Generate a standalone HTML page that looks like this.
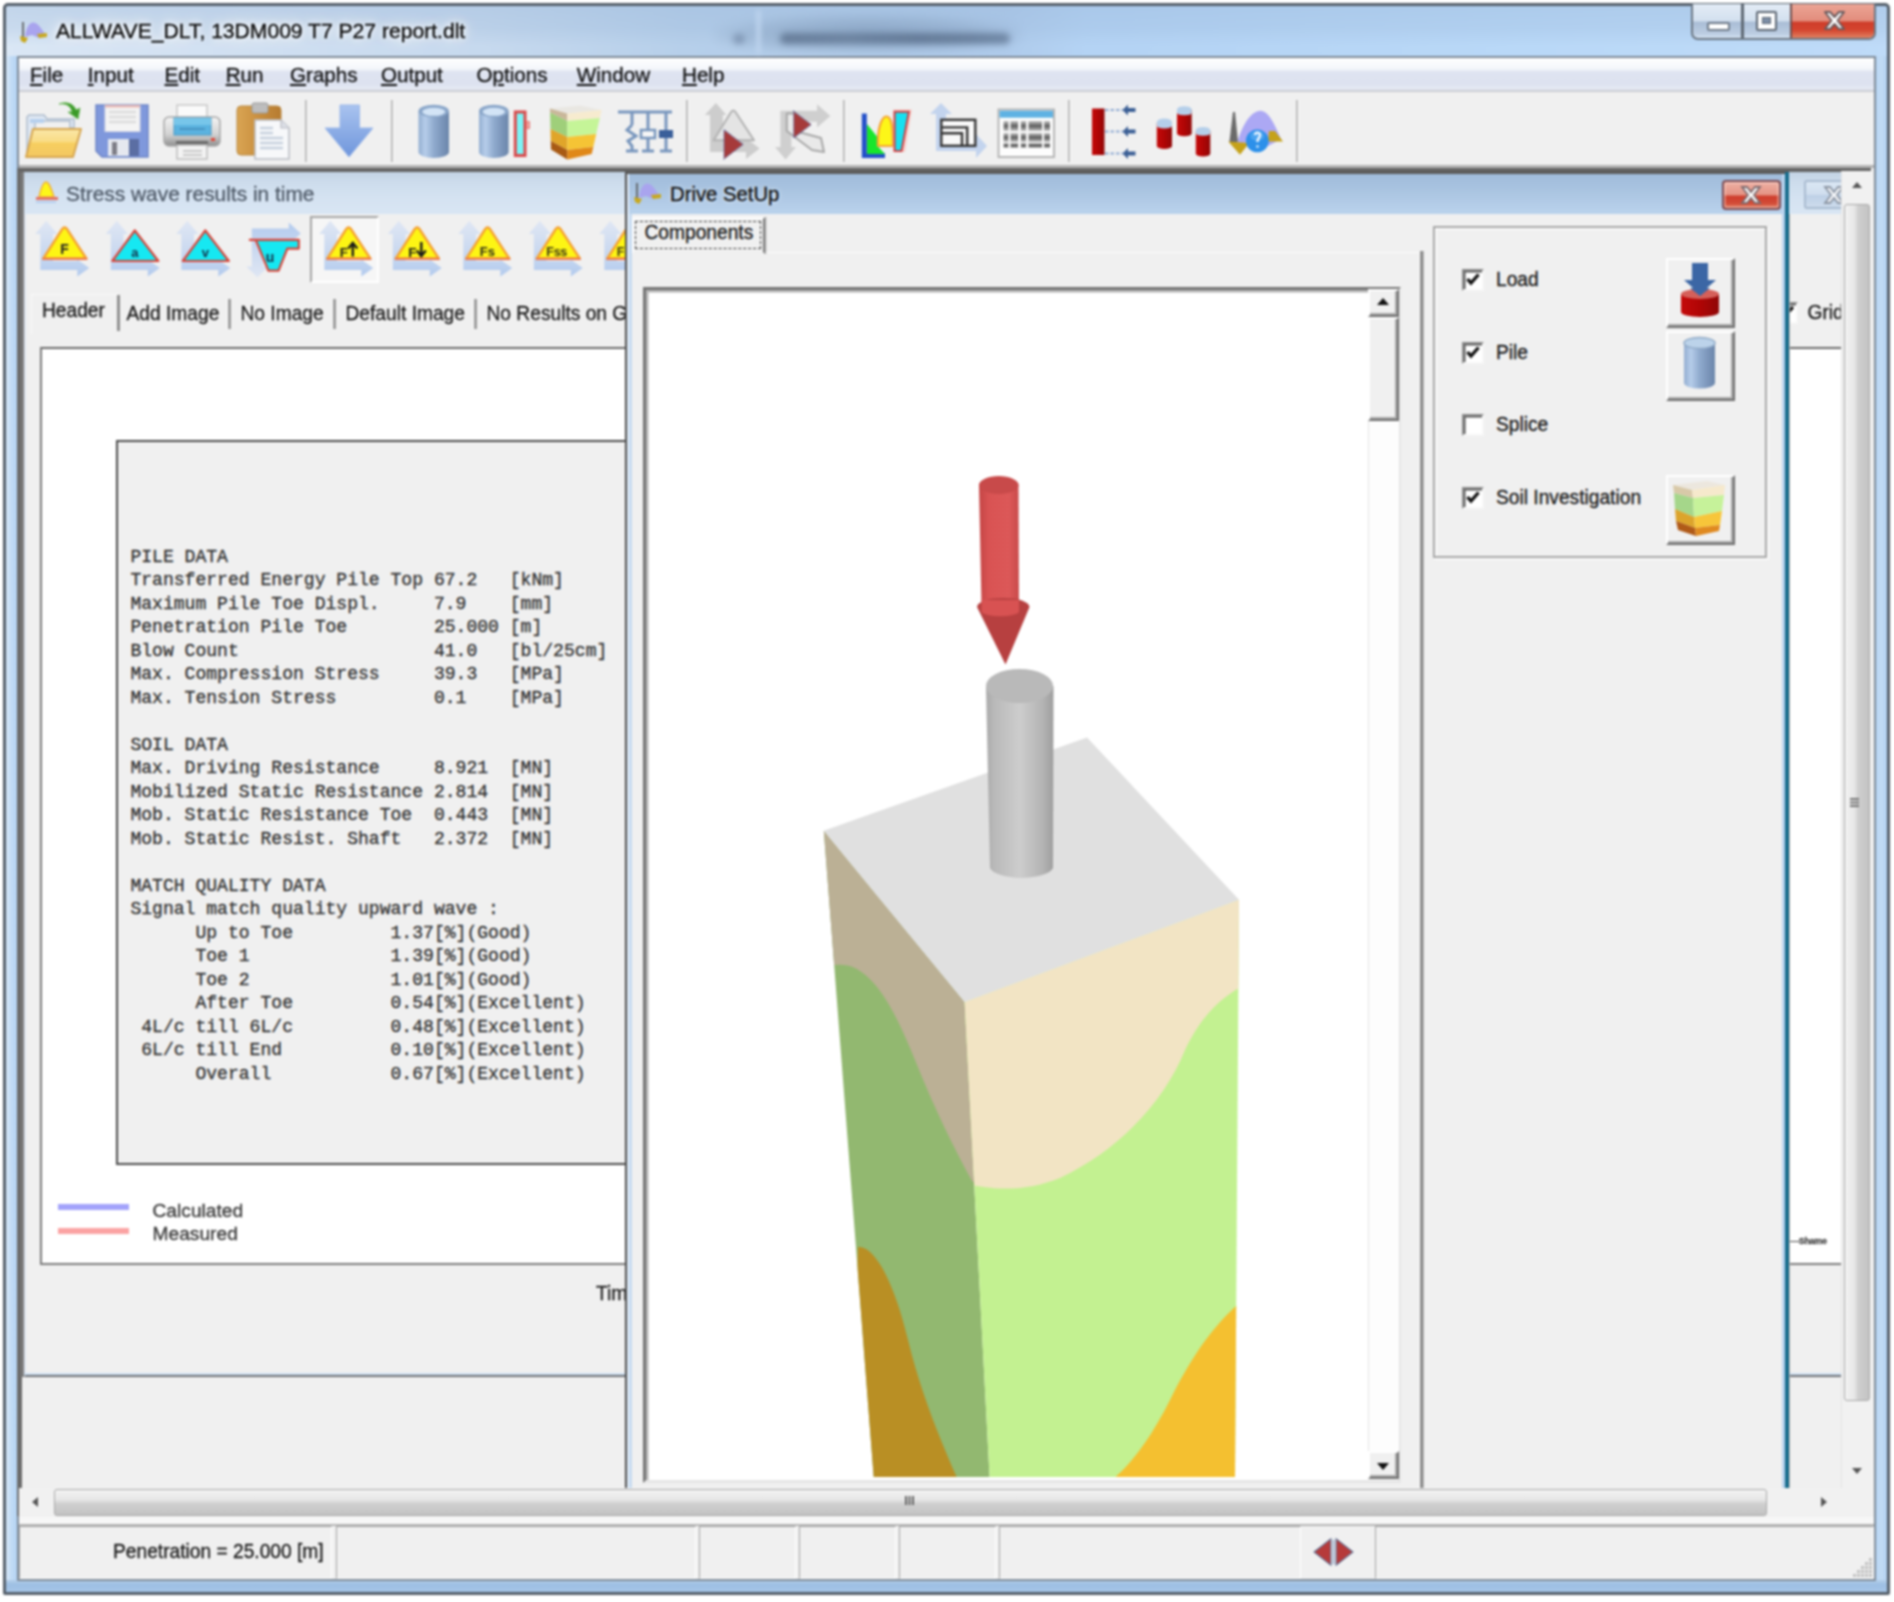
<!DOCTYPE html>
<html>
<head>
<meta charset="utf-8">
<title>ALLWAVE_DLT</title>
<style>
*{box-sizing:border-box;margin:0;padding:0}
html,body{width:1894px;height:1602px;background:#fff;overflow:hidden}
body{font-family:"Liberation Sans",sans-serif;color:#000;position:relative}
.a{position:absolute}
.t{position:absolute;white-space:nowrap;line-height:1;-webkit-text-stroke:.3px currentColor}
.ms{font-size:19.2px;color:#1a1a1a;transform:scaleY(1.1);transform-origin:0 100%}
.seg{font-size:20.8px}
u{text-decoration:underline;text-underline-offset:2px;text-decoration-thickness:1.5px}
#win{left:3px;top:3px;width:1887px;height:1592px;background:linear-gradient(180deg,rgba(150,180,215,.35) 0,rgba(150,180,215,.25) 22px,rgba(255,255,255,0) 40px),linear-gradient(90deg,#dae7f5 0,#d2e1f2 200px,#c6d9ee 480px,#b6cfea 680px,#afcbeb 1000px,#b4d3f4 1080px,#b9d8f7 1500px,#bfdbf8 1887px);border:3px solid #56606b;border-bottom-width:4.5px;border-radius:5px 5px 2px 2px}
#winL{left:6px;top:56px;width:11px;height:1524px;background:linear-gradient(90deg,#d5e6f8,#c1dbf5 50%,#b4d3f3)}
#winR{left:1876px;top:56px;width:11px;height:1524px;background:linear-gradient(90deg,#b9d6f3,#c1dbf5 50%,#b2d1f1)}
#winB{left:6px;top:1580px;width:1881px;height:12px;background:linear-gradient(180deg,#b5cfea 0,#9dbfe3 40%,#a6c6e8 100%)}
#client{left:17px;top:56px;width:1859px;height:1525px;background:#f0f0f0;border:2px solid #7e8a97}
#menubar{left:19px;top:58px;width:1855px;height:34px;background:linear-gradient(180deg,#ffffff 0,#f4f6fb 11px,#dfe4f1 14px,#dde2f0 26px,#e6eaf5 31px,#c9cbd1 33px,#c9cbd1 34px)}
#toolbar{left:19px;top:92px;width:1855px;height:73px;background:#f0f0f0}
.sep{position:absolute;top:100px;width:3px;height:62px;border-left:2px solid #bdbdbd;border-right:1px solid #fbfbfb}
pre{font-family:"Liberation Mono",monospace;font-size:18.07px;line-height:23.5px;color:#333;position:absolute;white-space:pre;-webkit-text-stroke:.3px #333}
.sunk{border:1.5px solid;border-color:#a3a3a3 #fff #fff #a3a3a3}
.btn3d{background:#f0f0f0;border:2px solid;border-color:#fff #6e6e6e #6e6e6e #fff;box-shadow:inset -2px -2px 0 #a8a8a8}
.cb{width:22px;height:22px;background:#fff;border:2px solid;border-color:#8a8a8a #f7f7f7 #f7f7f7 #8a8a8a;box-shadow:inset 1.5px 1.5px 0 #5a5a5a}
</style>
</head>
<body>
<div id="root" style="position:absolute;left:0;top:0;width:1894px;height:1602px;filter:blur(.9px)">
<div id="win" class="a"></div>
<div id="winL" class="a"></div><div id="winR" class="a"></div><div id="winB" class="a"></div>
<div id="client" class="a"></div>
<div id="menubar" class="a"></div>
<div id="toolbar" class="a"></div>
<!--TITLE-->
<div class="a" style="left:715px;top:14px;width:305px;height:38px;background:radial-gradient(ellipse at 50% 55%,rgba(95,120,150,.42) 0,rgba(110,135,165,.28) 50%,rgba(150,175,205,0) 78%);filter:blur(4px)"></div>
<div class="a" style="left:756px;top:10px;width:5px;height:44px;background:rgba(190,212,238,.9);filter:blur(2px)"></div>
<div class="a" style="left:733px;top:34px;width:12px;height:10px;background:rgba(80,100,130,.45);filter:blur(3px);border-radius:5px"></div>
<div class="a" style="left:780px;top:33px;width:230px;height:11px;background:linear-gradient(90deg,rgba(70,90,118,.62),rgba(70,90,118,.5) 30%,rgba(70,90,118,.62) 60%,rgba(70,90,118,.55));filter:blur(3.2px);border-radius:6px"></div>
<svg class="a" style="left:19px;top:20px" width="30" height="24" viewBox="0 0 30 24">
 <path d="M4 2 L4 19" stroke="#555" stroke-width="1.6"/>
 <path d="M6 17 C7 6 12 1 16 3 C20 4 23 10 27 15 L20 18 L13 15 Z" fill="#a9a4ee"/>
 <path d="M1 16 L9 18 L6 23 L2 21 Z" fill="#c8a81e"/>
 <path d="M18 14 L28 13 L28 17 L20 18 Z" fill="#c8a81e"/>
</svg>
<div class="t seg" style="left:56px;top:19.5px;font-size:21.1px;color:#0a0a0a;text-shadow:0 0 6px #fff,0 0 10px #fff,0 0 16px #fff,0 0 22px rgba(255,255,255,.9)">ALLWAVE_DLT, 13DM009 T7 P27 report.dlt</div>
<!-- caption buttons -->
<div class="a" style="left:1691px;top:4px;width:185px;height:36px;border:2px solid #6a7683;border-top:none;border-radius:0 0 7px 7px;overflow:hidden;background:linear-gradient(180deg,#e3ecf6 0,#d3e0ef 17px,#a9bdd6 18px,#bccde2 30px,#d6e4f3 34px)">
 <div class="a" style="left:48px;top:0;width:2.5px;height:36px;background:#5d6772"></div>
 <div class="a" style="left:97px;top:0;width:86px;height:36px;background:linear-gradient(180deg,#eba595 0,#e28c7c 17px,#cf3c2a 18px,#d4452f 26px,#e08263 34px);border-left:2px solid #6d4f4f"></div>
</div>
<div class="a" style="left:1707px;top:22px;width:23px;height:9px;background:#fff;border:2px solid #6f7b89;border-radius:2px"></div>
<div class="a" style="left:1756px;top:11px;width:21px;height:20px;background:#fff;border:2px solid #5c6672;border-radius:2px"></div>
<div class="a" style="left:1762px;top:17px;width:9px;height:7px;background:#7d8ea6;border:1.5px solid #5c6672"></div>
<svg class="a" style="left:1822px;top:10px" width="25" height="21" viewBox="0 0 25 21"><path d="M3 2 L8 2 L12.5 7 L17 2 L22 2 L15.5 10.5 L22 19 L17 19 L12.5 14 L8 19 L3 19 L9.5 10.5 Z" fill="#fff" stroke="#6a5a5c" stroke-width="2" stroke-linejoin="round"/></svg>

<!--MENU-->
<div class="t seg" style="left:30.0px;top:64.5px;font-size:20.6px;color:#111"><u>F</u>ile</div>
<div class="t seg" style="left:87.8px;top:64.5px;font-size:20.6px;color:#111"><u>I</u>nput</div>
<div class="t seg" style="left:164.5px;top:64.5px;font-size:20.6px;color:#111"><u>E</u>dit</div>
<div class="t seg" style="left:225.7px;top:64.5px;font-size:20.6px;color:#111"><u>R</u>un</div>
<div class="t seg" style="left:290.0px;top:64.5px;font-size:20.6px;color:#111"><u>G</u>raphs</div>
<div class="t seg" style="left:381.0px;top:64.5px;font-size:20.6px;color:#111"><u>O</u>utput</div>
<div class="t seg" style="left:476.5px;top:64.5px;font-size:20.6px;color:#111">O<u>p</u>tions</div>
<div class="t seg" style="left:576.8px;top:64.5px;font-size:20.6px;color:#111"><u>W</u>indow</div>
<div class="t seg" style="left:682.0px;top:64.5px;font-size:20.6px;color:#111"><u>H</u>elp</div>

<!--TOOLBAR-->
<svg class="a" style="left:19px;top:92px" width="1300" height="74" viewBox="19 92 1300 74">
<defs>
 <linearGradient id="gFold" x1="0" y1="0" x2="0" y2="1"><stop offset="0" stop-color="#fbe7a8"/><stop offset=".45" stop-color="#f9dc85"/><stop offset=".5" stop-color="#f7cf60"/><stop offset="1" stop-color="#f3c862"/></linearGradient>
 <linearGradient id="gCyl" x1="0" y1="0" x2="1" y2="0"><stop offset="0" stop-color="#93aed0"/><stop offset=".22" stop-color="#b6cdea"/><stop offset=".5" stop-color="#90abce"/><stop offset=".8" stop-color="#7993b8"/><stop offset="1" stop-color="#6b86aa"/></linearGradient>
 <linearGradient id="gArr" x1="0" y1="0" x2="0" y2="1"><stop offset="0" stop-color="#a9c3ef"/><stop offset="1" stop-color="#6f96dc"/></linearGradient>
 <linearGradient id="gRed" x1="0" y1="0" x2="1" y2="0"><stop offset="0" stop-color="#c40a0a"/><stop offset=".5" stop-color="#b00505"/><stop offset="1" stop-color="#8f0808"/></linearGradient>
 <linearGradient id="gClip" x1="0" y1="0" x2="1" y2="0"><stop offset="0" stop-color="#d9a553"/><stop offset=".5" stop-color="#c98f3f"/><stop offset="1" stop-color="#b67b30"/></linearGradient>
 <linearGradient id="gPr" x1="0" y1="0" x2="0" y2="1"><stop offset="0" stop-color="#f4f4f4"/><stop offset=".6" stop-color="#d2d2d2"/><stop offset="1" stop-color="#8e8e8e"/></linearGradient>
</defs>
<!-- open folder -->
<path d="M27 117 L27 156 L35 156 L35 121 L70 121 L70 128 L74 128 L74 119 L47 119 L44 115 L29 115 Z" fill="#dfe8f3" stroke="#aebccd" stroke-width="1.5"/>
<path d="M30 119 H44 V123 H30 Z" fill="#b7d0ee"/>
<path d="M33 129 L81 129 L73 157 L26 157 Z" fill="url(#gFold)" stroke="#d6a650" stroke-width="2" stroke-linejoin="round"/>
<path d="M59 104 C66 103 71 106 72 112 L68 112 L78 119 L80 108 L76 110 C74 104 67 101 59 104 Z" fill="#3a9a27" stroke="#6fb95e" stroke-width="1"/>
<!-- floppy -->
<path d="M96 105 H148 V157 H102 L96 151 Z" fill="#7f98dc" stroke="#6f86c6" stroke-width="1.5"/>
<rect x="105" y="105.5" width="35" height="26" fill="#f4f4f4" stroke="#d8d8e4" stroke-width="1"/>
<rect x="105" y="105" width="35" height="2.5" fill="#e9b9b4"/>
<path d="M109 112 H136 M109 117 H136 M109 122 H136" stroke="#dcdcdc" stroke-width="2.5"/>
<rect x="108" y="139" width="31" height="17" fill="#e5e8ef"/>
<rect x="129" y="139" width="10" height="17" fill="#5b6ea3"/>
<rect x="112" y="142" width="5" height="13" fill="#7d7d86"/>
<!-- printer -->
<rect x="177" y="105" width="30" height="14" fill="#fafafa" stroke="#c9c9c9" stroke-width="1.5"/>
<rect x="164" y="117" width="56" height="29" rx="5" fill="url(#gPr)" stroke="#a9a9a9" stroke-width="1.5"/>
<rect x="174" y="118" width="37" height="17" fill="#5bb3e0" stroke="#4a98c4" stroke-width="1"/>
<rect x="174" y="118" width="37" height="7" fill="#77c6ea"/>
<path d="M180 129 H205" stroke="#3f86b5" stroke-width="2" stroke-dasharray="2 1"/>
<rect x="176" y="141" width="32" height="5" fill="#6b6b6b"/>
<rect x="177" y="145" width="30" height="14" fill="#f3f3f3" stroke="#bdbdbd" stroke-width="1.5"/>
<path d="M183 151 H202 M183 155 H202" stroke="#c9c9c9" stroke-width="2"/>
<rect x="211" y="138" width="4" height="3" fill="#e04a3c"/>
<!-- clipboard -->
<rect x="237" y="106" width="44" height="49" rx="4" fill="url(#gClip)" stroke="#b98840" stroke-width="1"/>
<rect x="252" y="103" width="16" height="10" rx="2" fill="#bdbdbd" stroke="#9a9a9a" stroke-width="1"/>
<path d="M255 120 H281 L289 128 V159 H255 Z" fill="#f7f8fa" stroke="#b9bcc4" stroke-width="1.5"/>
<path d="M281 120 V128 H289" fill="#dcdfe6" stroke="#b9bcc4" stroke-width="1.2"/>
<path d="M260 128 H273 M260 133 H273 M260 138 H283 M260 143 H283 M260 148 H283" stroke="#c7d1de" stroke-width="2.5"/>
<!-- down arrow -->
<path d="M340 105 H359.5 V128 H373 L349 157 L325 128 H340 Z" fill="url(#gArr)" stroke="#9db9ea" stroke-width="1"/>
<!-- cylinder 1 -->
<path d="M418.500 111 V152 A15.200 6 0 0 0 449 152 V111 Z" fill="url(#gCyl)"/>
<ellipse cx="433.700" cy="111" rx="15.200" ry="6.200" fill="#8aa6c9"/>
<ellipse cx="433.700" cy="111.800" rx="11.500" ry="4" fill="#d3e4f6"/>
<!-- cylinder 2 + bar -->
<path d="M479 111 V152 A14.800 6 0 0 0 508.600 152 V111 Z" fill="url(#gCyl)"/>
<ellipse cx="493.800" cy="111" rx="14.800" ry="6.200" fill="#8aa6c9"/>
<ellipse cx="493.800" cy="111.800" rx="11.200" ry="4" fill="#d3e4f6"/>
<path d="M515.300 112 H525 V155.500 H515.300 Z" fill="#7cf4f6" stroke="#d94a4c" stroke-width="3"/><path d="M526.500 121.500 H529.500 V128.500 H526.500 Z" fill="#f0a8a4" stroke="#e47a78" stroke-width="1"/>
<!-- soil block -->
<path d="M549.900 108.400 L567.300 113.600 L601.600 110 L580 105.500 Z" fill="#e9e7e2"/>
<path d="M549.900 108.400 L567.300 113.600 L567.300 121 L550.100 112.500 Z" fill="#c9b79a"/>
<path d="M550.100 112.500 L567.300 121 L567.300 137 L550.500 129 Z" fill="#9fcf7a"/>
<path d="M550.500 129 L567.300 137 L567.300 150 L550.800 141 Z" fill="#e0a52a"/>
<path d="M550.800 141 L567.300 150 L567.300 159.500 L551 149.600 Z" fill="#a85a14"/>
<path d="M567.300 113.600 L601.600 110 L599.800 118 L567.300 121 Z" fill="#f7ebcf"/>
<path d="M567.300 121 L599.800 118 L596.200 134 L567.300 137 Z" fill="#c5f598"/>
<path d="M567.300 137 L596.200 134 L593.300 147 L567.300 150 Z" fill="#f5c435"/>
<path d="M567.300 150 L593.300 147 L591.700 154 L567.300 159.500 Z" fill="#e08818"/>
<!-- scheme -->
<g stroke="#7896bd" stroke-width="3" fill="none">
<path d="M618 112 H672"/><path d="M632 112 V125 M648 112 V132 M666 112 V132"/>
<path d="M632 125 L627 130 L636 136 L628 141 L632 146 V151"/>
<path d="M648 138 V151 M666 138 V151"/>
<path d="M626 151 H638 M642 151 H654 M660 151 H672"/>
</g>
<rect x="641" y="130" width="14" height="8" fill="#f7f7f7" stroke="#7896bd" stroke-width="2.5"/>
<rect x="659" y="130" width="14" height="8" fill="#3a5f9a"/>
<!-- icon A -->
<path d="M704.900 115 L715.900 103 L726.400 115 H722.900 V139.700 H746 V138 L759.500 148.500 L746 159 V152 H710 V115 Z" fill="#cdcdcd"/>
<path d="M713.600 140.300 L730.500 113 Q733.300 108 736.100 113 L754 140.300 Z" fill="#e4e4e4" stroke="#b2b2b2" stroke-width="2" stroke-linejoin="round"/>
<path d="M724 129.800 L743.200 144.400 L724 158.900 Z" fill="#a63a3a" stroke="#6a78a8" stroke-width="1.200" stroke-dasharray="1.500 1"/>
<!-- icon B -->
<path d="M780.400 110.700 H817 V104.300 L830.300 116 L817 127.500 V121.700 H791.400 V147 H796 L785.600 159.500 L775 147 H780.400 Z" fill="#cfcfcf"/>
<path d="M786.800 113.600 L795 113.600 L795 131 L821 138 L824 152 L812 150 L786.800 131 Z" fill="#e9e9e9" stroke="#a8a8a8" stroke-width="2" stroke-linejoin="round"/>
<path d="M793.700 111.300 L811.200 124.600 L793.700 138 Z" fill="#a63a3a" stroke="#6a78a8" stroke-width="1.200" stroke-dasharray="1.500 1"/>
<!-- icon C -->
<path d="M864.300 113.600 V155.600 H885" fill="none" stroke="#2350c9" stroke-width="5"/>
<path d="M867 124 L881 141.500 L877.500 146 L885 154 H867 Z" fill="#17e62c"/>
<path d="M878 146 C877 128 882 117 886 116.500 C891 116 893 124 893 146 Z" fill="#fdf618" stroke="#f5a535" stroke-width="2.200"/>
<path d="M893 109.500 H912 L905 152 H893 Z" fill="#f6c6c0" opacity=".8"/>
<path d="M894.600 111.700 H908.900 L901.500 151 H894.600 Z" fill="#17e0f0" stroke="#cf4044" stroke-width="2"/>
<!-- icon D -->
<path d="M930 114 L941 103 L952 114 H946 V140 H976 V134 L987 146 L976 158 V151 H936 V114 Z" fill="#c3d4ee"/>
<rect x="941.300" y="119.800" width="34" height="26" fill="#f9f9f9" stroke="#353535" stroke-width="2.400"/>
<path d="M941.300 127.400 H967.200 V145.800 M941.300 133.200 H962 V145.800" fill="none" stroke="#353535" stroke-width="2.400"/>
<!-- icon E table -->
<rect x="998.500" y="109.500" width="55.500" height="47.500" fill="#fdfdfd" stroke="#b5b5b5" stroke-width="2"/>
<rect x="999.500" y="110.700" width="53.500" height="7" fill="#5fb2e3"/>
<defs><linearGradient id="gRow" x1="0" y1="0" x2="0" y2="1"><stop offset="0" stop-color="#c4c4c4"/><stop offset=".5" stop-color="#5c5c5c"/><stop offset="1" stop-color="#c4c4c4"/></linearGradient></defs>
<rect x="1003.600" y="121" width="46.400" height="10" fill="url(#gRow)"/>
<rect x="1003.600" y="133" width="46.400" height="9" fill="url(#gRow)"/>
<rect x="1003.600" y="143.500" width="46.400" height="4" fill="#6a6a6a"/>
<g fill="#f6f6f6"><rect x="1008.300" y="120" width="2.300" height="29"/><rect x="1018" y="120" width="3" height="29"/><rect x="1026" y="120" width="2.600" height="29"/><rect x="1042" y="120" width="2.200" height="29"/></g>
<!-- icon F -->
<rect x="1092" y="108.500" width="12.500" height="46.500" fill="url(#gRed)"/>
<g stroke="#8ea9d2" stroke-width="2.200" stroke-dasharray="3.500 2"><path d="M1105 110 H1123 M1105 131.500 H1123 M1105 153.500 H1123"/></g>
<g fill="#3b5f95"><path d="M1135.500 108 H1128 V104.500 L1122.500 110 L1128 115.500 V112 H1135.500 Z M1135.500 129.500 H1128 V126 L1122.500 131.500 L1128 137 V133.500 H1135.500 Z M1135.500 151.500 H1128 V148 L1122.500 153.500 L1128 159 V155.500 H1135.500 Z"/></g>
<!-- icon G -->
<g>
<path d="M1156.800 123 V146 A7.600 3 0 0 0 1172 146 V123 Z" fill="url(#gRed)"/><path d="M1156.800 126 V122 A7.600 3.500 0 0 1 1172 122 V126 A7.600 2.500 0 0 1 1156.800 126 Z" fill="#b5cfea"/>
<path d="M1177 110 V133.500 A7.400 3 0 0 0 1191.700 133.500 V110 Z" fill="url(#gRed)"/><path d="M1177 113 V109.300 A7.400 3.500 0 0 1 1191.700 109.300 V113 A7.400 2.500 0 0 1 1177 113 Z" fill="#b5cfea"/>
<path d="M1195.800 131 V153.800 A7.300 3 0 0 0 1210.300 153.800 V131 Z" fill="url(#gRed)"/><path d="M1195.800 133.500 V130 A7.300 3.500 0 0 1 1210.300 130 V133.500 A7.300 2.500 0 0 1 1195.800 133.500 Z" fill="#b5cfea"/>
</g>
<!-- icon H -->
<path d="M1229.400 142 L1233 112 L1235 112 L1238 142 Z" fill="#6a6a6a"/>
<path d="M1237 144 C1242 124 1252 110 1261 110.700 C1270 112 1275 126 1281 139 L1268 146 L1250 142 Z" fill="#aca8f4"/>
<path d="M1228.300 141.500 L1249.200 143 L1240 154.800 Z" fill="#c5a21a"/>
<path d="M1269 131 L1275 131 L1283 141.500 L1268 141.500 Z" fill="#c5a21a"/>
<circle cx="1257.300" cy="140.900" r="11.400" fill="#2c90ea"/><ellipse cx="1257.300" cy="136" rx="7" ry="5" fill="#58adf2" opacity=".7"/>
<path d="M1255 135 C1255.500 131.500 1260.500 132 1260 135.500 C1259.500 138 1257.500 138.500 1257.500 142 M1257.500 145.500 V147.500" stroke="#f2f8ff" stroke-width="2.400" fill="none"/>
</svg>
<div class="sep" style="left:304.5px"></div>
<div class="sep" style="left:390.5px"></div>
<div class="sep" style="left:686px"></div>
<div class="sep" style="left:843px"></div>
<div class="sep" style="left:1068px"></div>
<div class="sep" style="left:1295.5px"></div>

<!--MDI-->
<div class="a" style="left:19px;top:165px;width:1855px;height:3px;background:#b4b4b4"></div>
<div class="a" style="left:17px;top:168px;width:4.5px;height:1348px;background:#6b6b6b"></div>
<div class="a" style="left:21px;top:168px;width:3px;height:1209px;background:#7c7c7c"></div>
<div class="a" style="left:19px;top:167.5px;width:1852px;height:4px;background:#656565"></div>
<!--CHILD-->
<div class="a" style="left:24px;top:172px;width:1817px;height:1205px;background:#f0f0f0;border-bottom:3px solid #6f7276;border-left:2.5px solid #dfe6f0"></div>
<div class="a" style="left:24px;top:172px;width:1817px;height:42px;background:linear-gradient(180deg,#c3d3e4 0,#cddcec 10px,#d4e2f1 24px,#d9e6f4 42px)"></div>
<div class="a" style="left:24px;top:1373px;width:1817px;height:2px;background:#cfe0f2"></div>
<svg class="a" style="left:34px;top:180px" width="26" height="24" viewBox="0 0 26 24"><path d="M5 17 C7 8 9 2 12 2 C15 2 17 8 20 17 Z" fill="#fdf61a" stroke="#f3b43a" stroke-width="1.5"/><path d="M2 18.5 H24" stroke="#e27466" stroke-width="3"/><path d="M2 22 H22" stroke="#b4cdee" stroke-width="2"/></svg>
<div class="t seg" style="left:66px;top:183.5px;font-size:20.9px;color:#4f5a68">Stress wave results in time</div>
<div class="a" style="left:310px;top:216px;width:69px;height:67px;background:#f6f6f6;border:2.5px solid;border-color:#a5a5a5 #fff #fff #a5a5a5"></div>
<svg class="a" style="left:24px;top:214px" width="602" height="70" viewBox="24 214 602 70">
<defs><linearGradient id="gBg" x1="0" y1="0" x2="0" y2="1"><stop offset="0" stop-color="#e0e7f4"/><stop offset=".55" stop-color="#cad9f0"/><stop offset="1" stop-color="#b3cbee"/></linearGradient><linearGradient id="gBg2" x1="0" y1="0" x2="0" y2="1"><stop offset="0" stop-color="#b3cbee"/><stop offset=".5" stop-color="#cad9f0"/><stop offset="1" stop-color="#e0e7f4"/></linearGradient></defs>
<path d="M35.3 234 L46.3 220.7 L57.3 234 H53 V261 H77.3 V259.6 L89.3 268 L77.3 276.5 V270 H40.3 V234 Z" fill="url(#gBg)"/><path d="M43.3 258.5 L61.3 230.5 Q64.6 224.5 67.9 230.5 L86.3 258.5 Z" fill="#fdf514" stroke="#f5a232" stroke-width="2.4" stroke-linejoin="round"/><path d="M42.3 259 H87.3" stroke="#ee7a52" stroke-width="2.2"/><text x="60.3" y="254" font-family="Liberation Sans" font-weight="bold" font-size="14" fill="#222">F</text>
<path d="M105.8 234 L116.8 220.7 L127.8 234 H123.5 V261 H147.8 V259.6 L159.8 268 L147.8 276.5 V270 H110.8 V234 Z" fill="url(#gBg)"/><path d="M112.3 261 L134.8 230.5 L158.3 261 Z" fill="#16e8f2" stroke="#d8453a" stroke-width="2.2" stroke-linejoin="round"/><text x="131.3" y="256.5" font-family="Liberation Sans" font-weight="bold" font-size="13" fill="#16324a">a</text>
<path d="M176.3 234 L187.3 220.7 L198.3 234 H194 V261 H218.3 V259.6 L230.3 268 L218.3 276.5 V270 H181.3 V234 Z" fill="url(#gBg)"/><path d="M182.8 261 L205.3 230.5 L228.8 261 Z" fill="#16e8f2" stroke="#d8453a" stroke-width="2.2" stroke-linejoin="round"/><text x="201.8" y="256.5" font-family="Liberation Sans" font-weight="bold" font-size="13" fill="#16324a">v</text>
<path d="M251.8 228.4 H288.8 V222.4 L300.8 233.4 L288.8 244.4 V239.3 H263.4 V266.4 H268.4 L257.4 277.4 L246.4 266.4 H251.8 Z" fill="url(#gBg2)"/><path d="M249.8 239.8 H298.8 V248.6 H287.3 L278.6 270.6 H268.4 L255.7 239.8 Z" fill="#16e8f2" stroke="#d8453a" stroke-width="2.2" stroke-linejoin="round"/><text x="265.8" y="262" font-family="Liberation Sans" font-weight="bold" font-size="14" fill="#16324a">u</text>
<path d="M319.3 234 L330.3 220.7 L341.3 234 H337 V261 H361.3 V259.6 L373.3 268 L361.3 276.5 V270 H324.3 V234 Z" fill="url(#gBg)"/><path d="M327.3 258.5 L345.3 230.5 Q348.6 224.5 351.9 230.5 L370.3 258.5 Z" fill="#fdf514" stroke="#f5a232" stroke-width="2.4" stroke-linejoin="round"/><path d="M326.3 259 H371.3" stroke="#ee7a52" stroke-width="2.2"/><text x="339.8" y="256.5" font-family="Liberation Sans" font-weight="bold" font-size="13.5" fill="#1a1a1a">F</text><path d="M352.8 256.5 V243 M348.3 248.5 L352.8 243 L357.3 248.5" stroke="#1a1a1a" stroke-width="2.4" fill="none"/>
<path d="M387.8 234 L398.8 220.7 L409.8 234 H405.5 V261 H429.8 V259.6 L441.8 268 L429.8 276.5 V270 H392.8 V234 Z" fill="url(#gBg)"/><path d="M395.8 258.5 L413.8 230.5 Q417.1 224.5 420.4 230.5 L438.8 258.5 Z" fill="#fdf514" stroke="#f5a232" stroke-width="2.4" stroke-linejoin="round"/><path d="M394.8 259 H439.8" stroke="#ee7a52" stroke-width="2.2"/><text x="408.3" y="256.5" font-family="Liberation Sans" font-weight="bold" font-size="13.5" fill="#1a1a1a">F</text><path d="M421.3 242 V256 M416.8 250.5 L421.3 256 L425.8 250.5" stroke="#1a1a1a" stroke-width="2.4" fill="none"/>
<path d="M458.3 234 L469.3 220.7 L480.3 234 H476 V261 H500.3 V259.6 L512.3 268 L500.3 276.5 V270 H463.3 V234 Z" fill="url(#gBg)"/><path d="M466.3 258.5 L484.3 230.5 Q487.6 224.5 490.9 230.5 L509.3 258.5 Z" fill="#fdf514" stroke="#f5a232" stroke-width="2.4" stroke-linejoin="round"/><path d="M465.3 259 H510.3" stroke="#ee7a52" stroke-width="2.2"/><text x="479.8" y="256" font-family="Liberation Sans" font-weight="bold" font-size="13" fill="#2a2a1a">Fs</text>
<path d="M528.8 234 L539.8 220.7 L550.8 234 H546.5 V261 H570.8 V259.6 L582.8 268 L570.8 276.5 V270 H533.8 V234 Z" fill="url(#gBg)"/><path d="M536.8 258.5 L554.8 230.5 Q558.1 224.5 561.4 230.5 L579.8 258.5 Z" fill="#fdf514" stroke="#f5a232" stroke-width="2.4" stroke-linejoin="round"/><path d="M535.8 259 H580.8" stroke="#ee7a52" stroke-width="2.2"/><text x="546.3" y="256" font-family="Liberation Sans" font-weight="bold" font-size="12.5" fill="#3a3418" letter-spacing="-.3">Fss</text>
<path d="M599.3 234 L610.3 220.7 L621.3 234 H617 V261 H641.3 V259.6 L653.3 268 L641.3 276.5 V270 H604.3 V234 Z" fill="url(#gBg)"/><path d="M607.3 258.5 L625.3 230.5 Q628.6 224.5 631.9 230.5 L650.3 258.5 Z" fill="#fdf514" stroke="#f5a232" stroke-width="2.4" stroke-linejoin="round"/><path d="M606.3 259 H651.3" stroke="#ee7a52" stroke-width="2.2"/><text x="616.8" y="256" font-family="Liberation Sans" font-weight="bold" font-size="12.5" fill="#3a3418" letter-spacing="-.3">Fss</text>
</svg>
<!-- tabs -->
<div class="a" style="left:31px;top:294px;width:87px;height:40px;background:#f0f0f0;border-top:1.5px solid #fafafa;border-left:1.5px solid #fafafa"></div>
<div class="t ms" style="left:42px;top:300.5px">Header</div>
<div class="t ms" style="left:126.5px;top:304px">Add Image</div>
<div class="t ms" style="left:240.5px;top:304px">No Image</div>
<div class="t ms" style="left:345.5px;top:304px">Default Image</div>
<div class="t ms" style="left:486.5px;top:304px">No Results on Graph</div>
<div class="a" style="left:116.5px;top:295px;width:3px;height:36px;background:#8f8f8f"></div>
<div class="a" style="left:227px;top:299px;width:4px;height:30px;background:#9c9c9c;border-left:1px solid #fcfcfc"></div>
<div class="a" style="left:332px;top:299px;width:4px;height:30px;background:#9c9c9c;border-left:1px solid #fcfcfc"></div>
<div class="a" style="left:472.5px;top:299px;width:4px;height:30px;background:#9c9c9c;border-left:1px solid #fcfcfc"></div>
<!-- canvas -->
<div class="a" style="left:40px;top:346.5px;width:1815px;height:918px;background:#fff;border:2.5px solid #7b7b7b;border-top-color:#6a6a6a"></div>
<div class="a" style="left:116px;top:440px;width:560px;height:725px;background:#f0f0f0;border:2.5px solid #4b4b4b"></div>
<pre style="left:130.4px;top:545.5px">PILE DATA
Transferred Energy Pile Top 67.2   [kNm]
Maximum Pile Toe Displ.     7.9    [mm]
Penetration Pile Toe        25.000 [m]
Blow Count                  41.0   [bl/25cm]
Max. Compression Stress     39.3   [MPa]
Max. Tension Stress         0.1    [MPa]

SOIL DATA
Max. Driving Resistance     8.921  [MN]
Mobilized Static Resistance 2.814  [MN]
Mob. Static Resistance Toe  0.443  [MN]
Mob. Static Resist. Shaft   2.372  [MN]

MATCH QUALITY DATA
Signal match quality upward wave :
      Up to Toe         1.37[%](Good)
      Toe 1             1.39[%](Good)
      Toe 2             1.01[%](Good)
      After Toe         0.54[%](Excellent)
 4L/c till 6L/c         0.48[%](Excellent)
 6L/c till End          0.10[%](Excellent)
      Overall           0.67[%](Excellent)</pre>
<div class="a" style="left:58px;top:1204px;width:71px;height:6px;background:#a3a3fb"></div>
<div class="a" style="left:58px;top:1228px;width:71px;height:5.5px;background:#fba3a3"></div>
<div class="t" style="left:152.5px;top:1200.6px;font-size:19.2px;color:#3c3c3c;-webkit-text-stroke:.35px #3c3c3c">Calculated</div>
<div class="t" style="left:152.5px;top:1223.6px;font-size:19.2px;color:#3c3c3c;-webkit-text-stroke:.35px #3c3c3c">Measured</div>
<div class="t ms" style="left:596px;top:1283.5px">Time</div>
<!-- right visible strip of child -->
<div class="a" style="left:1804px;top:180px;width:45px;height:29px;background:linear-gradient(180deg,#dbe7f4 0,#cfdeee 50%,#bdd0e6 52%,#cddcec 100%);border:2px solid #a9bbd0;border-radius:3px"></div>
<svg class="a" style="left:1823px;top:186px" width="22" height="18" viewBox="0 0 22 18"><path d="M2 1 H7 L11 6 L15 1 H20 L14 9 L20 17 H15 L11 12 L7 17 H2 L8 9 Z" fill="#f4f6f9" stroke="#8b95a3" stroke-width="1.8"/></svg>
<div class="a cb" style="left:1776px;top:302px"></div>
<svg class="a" style="left:1780px;top:306px" width="14" height="14" viewBox="0 0 14 14"><path d="M1 6 L5 10 L13 1" stroke="#111" stroke-width="3.2" fill="none"/></svg>
<div class="t ms" style="left:1807.5px;top:302.5px">Grid</div>
<div class="t" style="left:1790px;top:1237px;font-size:9px;color:#444;letter-spacing:-.3px;font-weight:bold">—Shame</div>

<!--DRIVE-->
<div class="a" style="left:624.5px;top:171px;width:1164px;height:1317px;background:#f0f0f0;border-left:2px solid #4c4c4c;border-top:3px solid #5b5b5b"></div>
<div class="a" style="left:626.5px;top:174px;width:2.5px;height:1314px;background:#e3edf8"></div>
<div class="a" style="left:629px;top:174px;width:1156px;height:40px;background:linear-gradient(180deg,#a0bcdb 0,#a8c3e0 14px,#b2cbe7 28px,#bad3ed 40px)"></div>
<div class="a" style="left:629px;top:214px;width:2.5px;height:1274px;background:#c7dbf0"></div>
<div class="a" style="left:1781.5px;top:174px;width:4px;height:1314px;background:#b9d3ee"></div>
<div class="a" style="left:1785px;top:172px;width:3.5px;height:1316px;background:#176c8c"></div>
<div class="a" style="left:1788.5px;top:214px;width:1.5px;height:1274px;background:#b9b3b3"></div>
<svg class="a" style="left:633px;top:181px" width="30" height="24" viewBox="0 0 30 24">
 <path d="M4 2 L4 19" stroke="#555" stroke-width="1.6"/>
 <path d="M6 17 C7 6 12 1 16 3 C20 4 23 10 27 15 L20 18 L13 15 Z" fill="#a9a4ee"/>
 <path d="M1 16 L9 18 L6 23 L2 21 Z" fill="#c8a81e"/>
 <path d="M18 14 L28 13 L28 17 L20 18 Z" fill="#c8a81e"/>
</svg>
<div class="t seg" style="left:670px;top:184px;font-size:20.3px;color:#111;text-shadow:0 0 5px rgba(255,255,255,.7)">Drive SetUp</div>
<!-- close btn -->
<div class="a" style="left:1722px;top:180px;width:59px;height:30px;border:2px solid #7b4a52;border-radius:4px;background:linear-gradient(180deg,#eeb0a4 0,#e49283 13px,#cf3d2c 14px,#d24a36 21px,#e38b6d 28px);box-shadow:inset 0 0 0 1.5px rgba(255,220,210,.55)"></div>
<svg class="a" style="left:1740px;top:186px" width="22" height="18" viewBox="0 0 22 18"><path d="M2 1 H7 L11 6 L15 1 H20 L14 9 L20 17 H15 L11 12 L7 17 H2 L8 9 Z" fill="#fbfbfb" stroke="#7d6a6e" stroke-width="1.8"/></svg>
<!-- tab -->
<div class="a" style="left:632px;top:217px;width:133px;height:37px;border:2px solid;border-color:#fcfcfc #7a7a7a #f0f0f0 #fcfcfc;background:#f0f0f0;box-shadow:1.5px 0 0 #b9b9b9"></div>
<div class="a" style="left:635px;top:220.5px;width:125.5px;height:28.5px;border:1.5px dashed #3c3c3c"></div>
<div class="t ms" style="left:644.5px;top:223px">Components</div>
<div class="a" style="left:766px;top:251.5px;width:654px;height:1.5px;background:#fbfbfb"></div>
<!-- tab page right edge -->
<div class="a" style="left:1419px;top:251px;width:5px;height:1237px;background:#8d8d8d;border-left:1.5px solid #fbfbfb;border-right:1px solid #b5b5b5"></div>
<!-- 3D view -->
<div class="a" style="left:643px;top:286.5px;width:758px;height:1196px;background:#fff;border:3px solid;border-color:#757575 #e6e6e6 #e6e6e6 #757575;box-shadow:inset 2.5px 2.5px 0 #b6b6b6"></div>
<!--VIEW3D-->
<svg class="a" style="left:649px;top:292px" width="718" height="1185" viewBox="649 292 718 1185">
<defs>
 <linearGradient id="gPile" x1="0" y1="0" x2="1" y2="0"><stop offset="0" stop-color="#a9a9a9"/><stop offset=".12" stop-color="#b9b9b9"/><stop offset=".5" stop-color="#cdcdcd"/><stop offset=".85" stop-color="#b3b3b3"/><stop offset="1" stop-color="#9d9d9d"/></linearGradient>
 <linearGradient id="gShaft" x1="0" y1="0" x2="1" y2="0"><stop offset="0" stop-color="#c44545"/><stop offset=".25" stop-color="#d95353"/><stop offset=".75" stop-color="#dc5858"/><stop offset="1" stop-color="#c94a4a"/></linearGradient>
 <clipPath id="cpL"><path d="M823.8 830.8 L964.6 1002 L989.6 1477 L873.7 1477 Z"/></clipPath>
 <clipPath id="cpR"><path d="M964.6 1002 L1239 899.7 L1235 1477 L989.6 1477 Z"/></clipPath>
</defs>
<!-- left face -->
<g clip-path="url(#cpL)">
 <rect x="800" y="800" width="220" height="700" fill="#92b870"/>
 <path d="M800 800 H1000 V1200 L972 1181 C955 1150 935 1110 915 1060 C895 1010 870 960 836 965 L800 965 Z" fill="#bbb095"/>
 <path d="M858 1247 C875 1245 895 1285 908 1340 C920 1390 940 1440 958 1480 L850 1480 Z" fill="#b98f24"/>
</g>
<!-- right face -->
<g clip-path="url(#cpR)">
 <rect x="950" y="880" width="300" height="620" fill="#c3f191"/>
 <path d="M950 880 H1250 V982 C1215 1000 1200 1020 1185 1050 C1165 1100 1120 1150 1060 1178 C1030 1190 1000 1192 960 1183 Z" fill="#f2e4c4"/>
 <path d="M1250 1295 C1215 1320 1190 1360 1170 1400 C1150 1440 1130 1465 1112 1480 H1250 Z" fill="#f4c030"/>
</g>
<!-- top face -->
<path d="M823.8 830.8 L1087 737.4 L1239 899.7 L964.6 1002 Z" fill="#e0e0e0"/>
<!-- pile -->
<path d="M986 686 L990 868 A32 12 0 0 0 1053 868 L1053.500 686 Z" fill="url(#gPile)"/>
<ellipse cx="1019.500" cy="686" rx="33.500" ry="17" fill="#b9b9b9"/>
<!-- arrow -->
<path d="M979 485 L981.500 606 L1019 606 L1018.500 485 A20 9 0 0 0 979 485 Z" fill="url(#gShaft)"/>
<ellipse cx="998.800" cy="485" rx="19.800" ry="9" fill="#c84a4a"/>
<path d="M977 607 A26 9 0 0 1 1029.500 607 L1005.500 664.500 Z" fill="#b74040"/>
<path d="M981.500 600 H1019 V612 A19 5 0 0 1 981.500 612 Z" fill="#d85252"/>
</svg>

<!-- view scrollbar -->
<div class="a" style="left:1368px;top:289px;width:31px;height:1190px;background:#fdfdfd;border-left:1.5px solid #e4e4e4"></div>
<div class="a btn3d" style="left:1368px;top:289px;width:31px;height:28px"></div>
<div class="a btn3d" style="left:1368px;top:317px;width:31px;height:104px"></div>
<div class="a btn3d" style="left:1368px;top:1451px;width:31px;height:28px"></div>
<svg class="a" style="left:1376px;top:297px" width="14" height="10" viewBox="0 0 14 10"><path d="M7 1 L13 8 H1 Z" fill="#111"/></svg>
<svg class="a" style="left:1376px;top:1461px" width="14" height="10" viewBox="0 0 14 10"><path d="M7 9 L13 2 H1 Z" fill="#111"/></svg>
<!-- group box -->
<div class="a" style="left:1433px;top:226px;width:334px;height:332px;border:2px solid #a6a6a6;box-shadow:1.5px 1.5px 0 #fdfdfd,inset 1.5px 1.5px 0 #fdfdfd"></div>
<div class="a cb" style="left:1462px;top:269px"></div>
<div class="a cb" style="left:1462px;top:341.5px"></div>
<div class="a cb" style="left:1462px;top:414px"></div>
<div class="a cb" style="left:1462px;top:486.5px"></div>
<svg class="a" style="left:1466px;top:273px" width="14" height="14" viewBox="0 0 14 14"><path d="M1.5 6 L5 10 L12.5 1.5" stroke="#111" stroke-width="3.4" fill="none"/></svg>
<svg class="a" style="left:1466px;top:345.5px" width="14" height="14" viewBox="0 0 14 14"><path d="M1.5 6 L5 10 L12.5 1.5" stroke="#111" stroke-width="3.4" fill="none"/></svg>
<svg class="a" style="left:1466px;top:490.5px" width="14" height="14" viewBox="0 0 14 14"><path d="M1.5 6 L5 10 L12.5 1.5" stroke="#111" stroke-width="3.4" fill="none"/></svg>
<div class="t ms" style="left:1496px;top:270px">Load</div>
<div class="t ms" style="left:1496px;top:342.5px">Pile</div>
<div class="t ms" style="left:1496px;top:415px">Splice</div>
<div class="t ms" style="left:1496px;top:487.5px">Soil Investigation</div>
<div class="a btn3d" style="left:1665.5px;top:258px;width:69.5px;height:69.5px"></div>
<div class="a btn3d" style="left:1665.5px;top:330.5px;width:69.5px;height:70px"></div>
<div class="a btn3d" style="left:1665.5px;top:475px;width:69.5px;height:69.5px"></div>
<svg class="a" style="left:1665px;top:258px" width="72" height="290" viewBox="1665 258 72 290">
<!-- load icon -->
<path d="M1692 263 H1708 V280 H1716 L1700 294 L1684 280 H1692 Z" fill="#3b66a5"/>
<path d="M1681 294 V312 A19 5 0 0 0 1719 312 V294 Z" fill="url(#gRed)"/>
<ellipse cx="1700" cy="294" rx="19" ry="5" fill="#d5605a"/>
<path d="M1690 288 L1700 296 L1710 288 Z" fill="#3b66a5"/>
<!-- pile icon -->
<path d="M1684 343 V383 A15.5 5.5 0 0 0 1715 383 V343 Z" fill="url(#gCyl)"/>
<ellipse cx="1699.5" cy="343" rx="15.5" ry="5.5" fill="#bcd3ea" stroke="#8fa9c6" stroke-width="1.5"/>
<!-- soil icon -->
<path d="M1673 485 L1692 490 L1725 485 L1707 481 Z" fill="#ece7de"/>
<path d="M1673 485 L1692 490 L1693 498 L1674 493 Z" fill="#d8c9a8"/>
<path d="M1692 490 L1725 485 L1724 495 L1693 498 Z" fill="#f6e9cc"/>
<path d="M1674 493 L1693 498 L1694 517 L1675 509 Z" fill="#a5d68a"/>
<path d="M1693 498 L1724 495 L1722 511 L1694 517 Z" fill="#c6f29a"/>
<path d="M1675 509 L1694 517 L1695 528 L1676 521 Z" fill="#dca42c"/>
<path d="M1694 517 L1722 511 L1720 525 L1695 528 Z" fill="#f7c63a"/>
<path d="M1676 521 L1695 528 L1696 536 L1678 530 Z" fill="#b05a18"/>
<path d="M1695 528 L1720 525 L1719 531 L1696 536 Z" fill="#e08a20"/>
</svg>

<!--SCROLL-->
<!-- vertical scrollbar -->
<div class="a" style="left:1840.5px;top:171px;width:33.5px;height:1317px;background:#f1f1f1;border-left:1px solid #e4e4e4"></div>
<div class="a" style="left:1844px;top:204px;width:26px;height:1197px;border:1.5px solid #a9a9a9;border-radius:3px;background:linear-gradient(90deg,#f3f3f3 0,#e6e6e6 40%,#cfcfcf 55%,#c3c3c3 100%)"></div>
<svg class="a" style="left:1851px;top:181px" width="12" height="9" viewBox="0 0 12 9"><path d="M6 1 L11 7 H1 Z" fill="#555"/></svg>
<svg class="a" style="left:1851px;top:1466px" width="12" height="9" viewBox="0 0 12 9"><path d="M6 8 L11 2 H1 Z" fill="#555"/></svg>
<div class="a" style="left:1850px;top:798px;width:9px;height:1.5px;background:#777;box-shadow:0 3.5px 0 #777,0 7px 0 #777"></div>
<!-- horizontal scrollbar -->
<div class="a" style="left:19px;top:1487.500px;width:1855px;height:29.500px;background:#f1f1f1"></div>
<div class="a" style="left:54px;top:1488.500px;width:1713px;height:27px;border:1.5px solid #a9a9a9;border-radius:3px;background:linear-gradient(180deg,#f3f3f3 0,#e6e6e6 40%,#cfcfcf 55%,#c3c3c3 100%)"></div>
<svg class="a" style="left:31px;top:1496px" width="9" height="12" viewBox="0 0 9 12"><path d="M1 6 L7 1 V11 Z" fill="#555"/></svg>
<svg class="a" style="left:1819px;top:1496px" width="9" height="12" viewBox="0 0 9 12"><path d="M8 6 L2 1 V11 Z" fill="#555"/></svg>
<div class="a" style="left:905px;top:1496px;width:1.500px;height:9px;background:#666;box-shadow:3.500px 0 0 #666,7px 0 0 #666"></div>

<!--STATUS-->
<div class="a" style="left:19px;top:1517px;width:1855px;height:7px;background:#f7f7f7"></div>
<div class="a" style="left:19px;top:1524px;width:1855px;height:55px;background:#f0f0f0;border-top:2px solid #b5b5b5"></div>
<div class="a sunk" style="left:19px;top:1526px;width:313px;height:53px"></div>
<div class="a sunk" style="left:335.500px;top:1526px;width:360px;height:53px"></div>
<div class="a sunk" style="left:698.500px;top:1526px;width:97px;height:53px"></div>
<div class="a sunk" style="left:798.500px;top:1526px;width:97px;height:53px"></div>
<div class="a sunk" style="left:898.500px;top:1526px;width:97px;height:53px"></div>
<div class="a sunk" style="left:998.500px;top:1526px;width:302px;height:53px"></div>
<div class="a sunk" style="left:1375px;top:1526px;width:499px;height:53px"></div>
<div class="t ms" style="left:113px;top:1541.500px">Penetration = 25.000 [m]</div>
<svg class="a" style="left:1312px;top:1537px" width="43" height="30" viewBox="0 0 46 34"><path d="M1 17 L20 2 V32 Z M45 17 L26 2 V32 Z" fill="#b63a3a" stroke="#5d6f92" stroke-width="1.2"/><path d="M23 3 V31" stroke="#9fb0cc" stroke-width="2"/></svg>
<svg class="a" style="left:1852px;top:1557px" width="22" height="22" viewBox="0 0 22 22"><g fill="#c2c2c2"><rect x="17" y="1" width="3" height="3"/><rect x="13" y="5" width="3" height="3"/><rect x="17" y="5" width="3" height="3"/><rect x="9" y="9" width="3" height="3"/><rect x="13" y="9" width="3" height="3"/><rect x="17" y="9" width="3" height="3"/><rect x="5" y="13" width="3" height="3"/><rect x="9" y="13" width="3" height="3"/><rect x="13" y="13" width="3" height="3"/><rect x="17" y="13" width="3" height="3"/><rect x="1" y="17" width="3" height="3"/><rect x="5" y="17" width="3" height="3"/><rect x="9" y="17" width="3" height="3"/><rect x="13" y="17" width="3" height="3"/><rect x="17" y="17" width="3" height="3"/></g></svg>

</div>
</body>
</html>
